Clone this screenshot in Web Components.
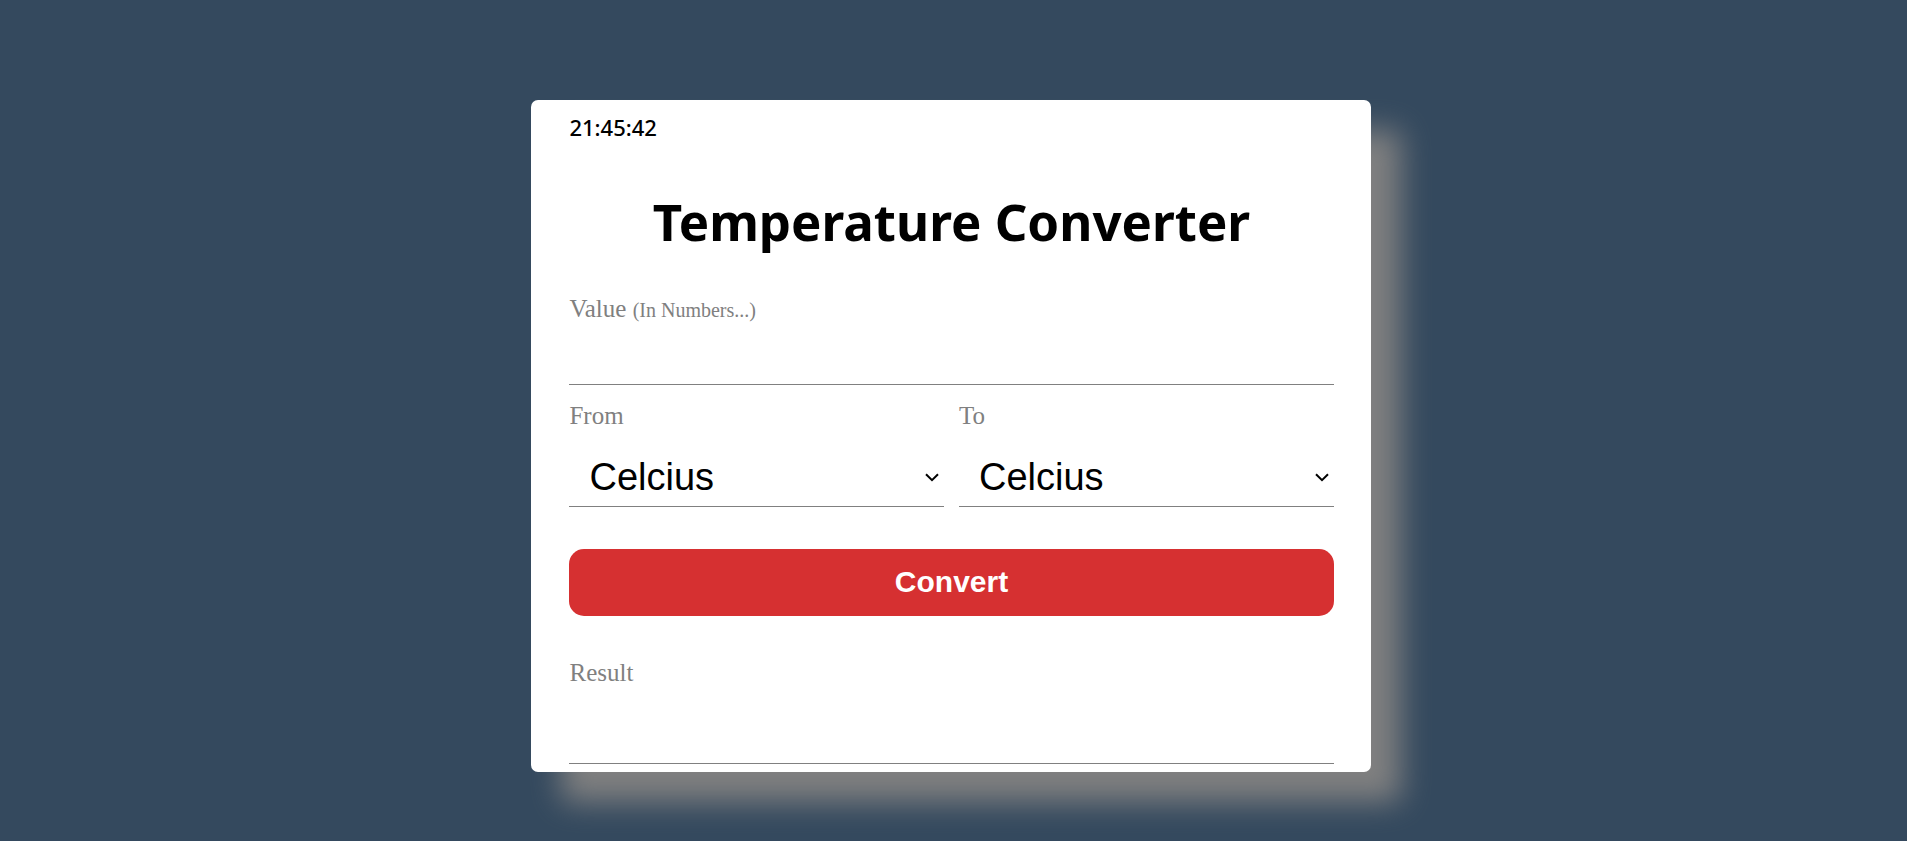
<!DOCTYPE html>
<html lang="en">
<head>
<meta charset="utf-8">
<meta name="viewport" content="width=device-width, initial-scale=1">
<title>Temperature Converter</title>
<style>
  body { margin: 0; min-height: 100vh; background: #34495e; font-family: "Liberation Serif", serif; }
</style>
</head>
<body>
<temperature-converter></temperature-converter>
<script>
const fieldStyles = `
  :host { display: block; min-width: 0; }
  label { display: block; color: gray; font-size: 25px; line-height: 30px; }
  input, select {
    display: block; width: 100%; height: 60px; box-sizing: border-box;
    border: 0; border-bottom: 1px solid gray; border-radius: 0; outline: none;
    background: transparent; color: #000; font: 38px "Liberation Sans", sans-serif;
  }
`;

class ClockDisplay extends HTMLElement {
  constructor() {
    super();
    this.attachShadow({ mode: 'open' }).innerHTML = `
      <style>
        :host { display: block; font: 500 22px/30px "Noto Sans", sans-serif; color: #000; }
      </style>
      <slot></slot>`;
  }
}

class TextField extends HTMLElement {
  constructor() {
    super();
    this.attachShadow({ mode: 'open' }).innerHTML = `
      <style>${fieldStyles}
        :host([spaced]) input { margin-top: 16px; }
      </style>
      <label for="control"><slot></slot></label>
      <input id="control" type="text">`;
    this.control = this.shadowRoot.querySelector('input');
    this.control.readOnly = this.hasAttribute('readonly');
  }
  get value() { return this.control.value; }
  set value(v) { this.control.value = v; }
}

class UnitSelect extends HTMLElement {
  constructor() {
    super();
    this.attachShadow({ mode: 'open' }).innerHTML = `
      <style>${fieldStyles}
        .box { display: grid; align-items: center; margin-top: 16px; }
        select, svg { grid-area: 1 / 1; }
        select { appearance: none; padding: 0 32px 0 20px; }
        svg { justify-self: end; margin-right: 5px; pointer-events: none; }
      </style>
      <label for="control"><slot></slot></label>
      <div class="box">
        <select id="control">
          <option>Celcius</option>
          <option>Fahrenheit</option>
          <option>Kelvin</option>
        </select>
        <svg width="14" height="9" viewBox="0 0 14 9" fill="none" stroke="#000" stroke-width="2" aria-hidden="true"><path d="M1 1.2 7 7.2 13 1.2"/></svg>
      </div>`;
  }
  get value() { return this.shadowRoot.querySelector('select').value; }
}

class ActionButton extends HTMLElement {
  constructor() {
    super();
    this.attachShadow({ mode: 'open' }).innerHTML = `
      <style>
        :host { display: block; }
        button {
          display: block; width: 100%; padding: 15px 16px 17px; border: 0; border-radius: 15px;
          background: #d63031; color: #fff; cursor: pointer;
          font: bold 30px/35px "Liberation Sans", sans-serif;
        }
      </style>
      <button type="button"><slot></slot></button>`;
  }
}

class TemperatureConverter extends HTMLElement {
  constructor() {
    super();
    this.attachShadow({ mode: 'open' }).innerHTML = `
      <style>
        :host { display: flex; justify-content: center; padding: 100px 5px 66px 0; }
        main {
          width: 44vw; min-width: 320px; box-sizing: border-box; padding: 12px 37px 8px 38px;
          background: #fff; border-radius: 7px; box-shadow: 30px 30px 30px gray;
        }
        h1 {
          margin: 43px 0 37px; text-align: center; color: #000;
          font: bold 51px/72px "Comic Sans MS", "Noto Sans", sans-serif;
        }
        small { font-size: 20px; }
        .units { display: grid; grid-template-columns: 1fr 1fr; gap: 15px; margin: 16px 0 42px; }
        action-button { margin-bottom: 42px; }
      </style>
      <main>
        <clock-display>21:45:42</clock-display>
        <h1>Temperature Converter</h1>
        <text-field id="value">Value <small>(In Numbers...)</small></text-field>
        <div class="units">
          <unit-select id="from">From</unit-select>
          <unit-select id="to">To</unit-select>
        </div>
        <action-button>Convert</action-button>
        <text-field id="result" spaced readonly>Result</text-field>
      </main>`;
    const get = id => this.shadowRoot.getElementById(id);
    this.shadowRoot.querySelector('action-button').addEventListener('click', () => {
      const raw = get('value').value.trim();
      const n = Number(raw);
      if (!raw || Number.isNaN(n)) return;
      const toC = { Celcius: x => x, Fahrenheit: x => (x - 32) / 1.8, Kelvin: x => x - 273.15 };
      const fromC = { Celcius: x => x, Fahrenheit: x => x * 1.8 + 32, Kelvin: x => x + 273.15 };
      get('result').value = String(Math.round(fromC[get('to').value](toC[get('from').value](n)) * 100) / 100);
    });
  }
}

customElements.define('clock-display', ClockDisplay);
customElements.define('text-field', TextField);
customElements.define('unit-select', UnitSelect);
customElements.define('action-button', ActionButton);
customElements.define('temperature-converter', TemperatureConverter);
</script>
</body>
</html>
